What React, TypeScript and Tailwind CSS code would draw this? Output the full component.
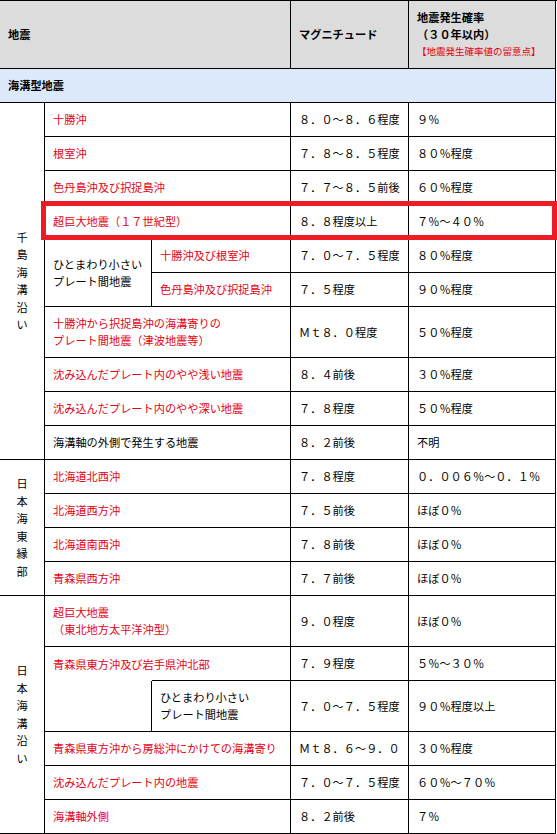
import React from "react";

const C = "flex items-center border-r border-b border-black pl-2";
const RED = "text-[#e60012]";

function V({ text, cls }: { text: string; cls: string }) {
  return (
    <div className={`flex flex-col items-center justify-center border-r border-b border-black leading-[17.5px] ${cls}`}>
      {text.split("").map((c, i) => (
        <span key={i}>{c}</span>
      ))}
    </div>
  );
}

export default function App() {
  return (
    <div className="relative w-[557px] h-[834px] bg-white font-['Noto_Sans_CJK_JP',sans-serif] text-[11.2px] text-black leading-[17px] overflow-hidden">
      <div className="grid grid-cols-[45px_107px_139px_118px_147px] grid-rows-[68px_34px_34px_34px_34px_34px_34px_34px_51px_34px_34px_34px_34px_34px_34px_34px_51px_34px_51px_34px_34px_34px] border-t border-black">
        {/* header */}
        <div className={`${C} col-start-1 col-end-4 row-start-1 bg-[#dcdcdc] font-bold`}>地震</div>
        <div className={`${C} col-start-4 row-start-1 bg-[#dcdcdc] font-bold`}>マグニチュード</div>
        <div className={`border-r border-b border-black pl-2 col-start-5 row-start-1 bg-[#dcdcdc] flex flex-col justify-center`}>
          <span className="font-bold">地震発生確率</span>
          <span className="font-bold">（３０年以内）</span>
          <span className={`${RED} text-[9.5px] pl-0`}>【地震発生確率値の留意点】</span>
        </div>
        <div className={`${C} col-start-1 col-end-6 row-start-2 bg-[#dbe9fb] font-bold`}>海溝型地震</div>

        {/* 千島海溝沿い */}
        <V text="千島海溝沿い" cls="col-start-1 row-start-3 row-end-13" />
        <div className={`${C} ${RED} col-start-2 col-end-4 row-start-3`}>十勝沖</div>
        <div className={`${C} col-start-4 row-start-3`}>８．０～８．６程度</div>
        <div className={`${C} col-start-5 row-start-3`}>９％</div>

        <div className={`${C} ${RED} col-start-2 col-end-4 row-start-4`}>根室沖</div>
        <div className={`${C} col-start-4 row-start-4`}>７．８～８．５程度</div>
        <div className={`${C} col-start-5 row-start-4`}>８０％程度</div>

        <div className={`${C} ${RED} col-start-2 col-end-4 row-start-5`}>色丹島沖及び択捉島沖</div>
        <div className={`${C} col-start-4 row-start-5`}>７．７～８．５前後</div>
        <div className={`${C} col-start-5 row-start-5`}>６０％程度</div>

        <div className={`${C} ${RED} col-start-2 col-end-4 row-start-6`}>超巨大地震（１７世紀型）</div>
        <div className={`${C} col-start-4 row-start-6`}>８．８程度以上</div>
        <div className={`${C} col-start-5 row-start-6`}>７％～４０％</div>

        <div className={`${C} col-start-2 row-start-7 row-end-9`}>
          <span>
            ひとまわり小さい
            <br />
            プレート間地震
          </span>
        </div>
        <div className={`${C} ${RED} col-start-3 row-start-7`}>十勝沖及び根室沖</div>
        <div className={`${C} col-start-4 row-start-7`}>７．０～７．５程度</div>
        <div className={`${C} col-start-5 row-start-7`}>８０％程度</div>
        <div className={`${C} ${RED} col-start-3 row-start-8`}>色丹島沖及び択捉島沖</div>
        <div className={`${C} col-start-4 row-start-8`}>７．５程度</div>
        <div className={`${C} col-start-5 row-start-8`}>９０％程度</div>

        <div className={`${C} ${RED} col-start-2 col-end-4 row-start-9`}>
          <span>
            十勝沖から択捉島沖の海溝寄りの
            <br />
            プレート間地震（津波地震等）
          </span>
        </div>
        <div className={`${C} col-start-4 row-start-9`}>Ｍｔ８．０程度</div>
        <div className={`${C} col-start-5 row-start-9`}>５０％程度</div>

        <div className={`${C} ${RED} col-start-2 col-end-4 row-start-10`}>沈み込んだプレート内のやや浅い地震</div>
        <div className={`${C} col-start-4 row-start-10`}>８．４前後</div>
        <div className={`${C} col-start-5 row-start-10`}>３０％程度</div>

        <div className={`${C} ${RED} col-start-2 col-end-4 row-start-11`}>沈み込んだプレート内のやや深い地震</div>
        <div className={`${C} col-start-4 row-start-11`}>７．８程度</div>
        <div className={`${C} col-start-5 row-start-11`}>５０％程度</div>

        <div className={`${C} col-start-2 col-end-4 row-start-12`}>海溝軸の外側で発生する地震</div>
        <div className={`${C} col-start-4 row-start-12`}>８．２前後</div>
        <div className={`${C} col-start-5 row-start-12`}>不明</div>

        {/* 日本海東縁部 */}
        <V text="日本海東縁部" cls="col-start-1 row-start-13 row-end-17" />
        <div className={`${C} ${RED} col-start-2 col-end-4 row-start-13`}>北海道北西沖</div>
        <div className={`${C} col-start-4 row-start-13`}>７．８程度</div>
        <div className={`${C} col-start-5 row-start-13`}>０．００６％～０．１％</div>

        <div className={`${C} ${RED} col-start-2 col-end-4 row-start-14`}>北海道西方沖</div>
        <div className={`${C} col-start-4 row-start-14`}>７．５前後</div>
        <div className={`${C} col-start-5 row-start-14`}>ほぼ０％</div>

        <div className={`${C} ${RED} col-start-2 col-end-4 row-start-15`}>北海道南西沖</div>
        <div className={`${C} col-start-4 row-start-15`}>７．８前後</div>
        <div className={`${C} col-start-5 row-start-15`}>ほぼ０％</div>

        <div className={`${C} ${RED} col-start-2 col-end-4 row-start-16`}>青森県西方沖</div>
        <div className={`${C} col-start-4 row-start-16`}>７．７前後</div>
        <div className={`${C} col-start-5 row-start-16`}>ほぼ０％</div>

        {/* 日本海溝沿い */}
        <V text="日本海溝沿い" cls="col-start-1 row-start-17 row-end-23" />
        <div className={`${C} ${RED} col-start-2 col-end-4 row-start-17`}>
          <span>
            超巨大地震
            <br />
            （東北地方太平洋沖型）
          </span>
        </div>
        <div className={`${C} col-start-4 row-start-17`}>９．０程度</div>
        <div className={`${C} col-start-5 row-start-17`}>ほぼ０％</div>

        <div className={`flex items-center pl-2 ${RED} col-start-2 col-end-4 row-start-18 border-r border-black`}>青森県東方沖及び岩手県沖北部</div>
        <div className={`${C} col-start-4 row-start-18`}>７．９程度</div>
        <div className={`${C} col-start-5 row-start-18`}>５％～３０％</div>

        <div className={`border-r border-b border-black col-start-2 row-start-19`} />
        <div className={`${C} col-start-3 row-start-19 border-t -mt-px`}>
          <span>
            ひとまわり小さい
            <br />
            プレート間地震
          </span>
        </div>
        <div className={`${C} col-start-4 row-start-19`}>７．０～７．５程度</div>
        <div className={`${C} col-start-5 row-start-19`}>９０％程度以上</div>

        <div className={`${C} ${RED} col-start-2 col-end-4 row-start-20`}>青森県東方沖から房総沖にかけての海溝寄り</div>
        <div className={`${C} col-start-4 row-start-20`}>Ｍｔ８．６～９．０</div>
        <div className={`${C} col-start-5 row-start-20`}>３０％程度</div>

        <div className={`${C} ${RED} col-start-2 col-end-4 row-start-21`}>沈み込んだプレート内の地震</div>
        <div className={`${C} col-start-4 row-start-21`}>７．０～７．５程度</div>
        <div className={`${C} col-start-5 row-start-21`}>６０％～７０％</div>

        <div className={`${C} ${RED} col-start-2 col-end-4 row-start-22`}>海溝軸外側</div>
        <div className={`${C} col-start-4 row-start-22`}>８．２前後</div>
        <div className={`${C} col-start-5 row-start-22`}>７％</div>
      </div>

      {/* red highlight box */}
      <div className="absolute left-[41px] top-[201px] w-[516px] h-[39px] border-[5px] border-[#ed1c24]" />
    </div>
  );
}
